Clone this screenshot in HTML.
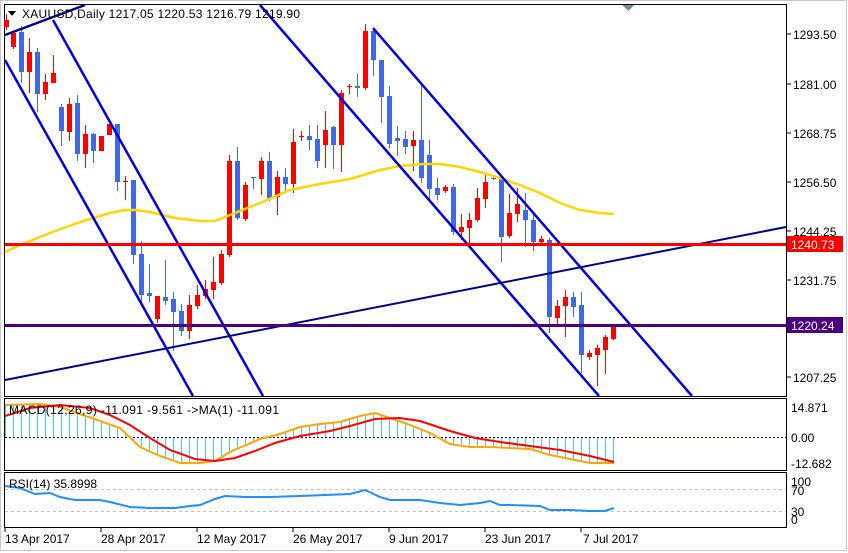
<!DOCTYPE html>
<html><head><meta charset="utf-8"><style>
html,body{margin:0;padding:0;background:#fff;}
body{width:848px;height:553px;overflow:hidden;position:relative;font-family:"Liberation Sans",sans-serif;}
svg{position:absolute;left:0;top:0;}
text{font-family:"Liberation Sans",sans-serif;font-size:12px;fill:#000;}
</style></head><body>
<svg id="s" width="848" height="553" viewBox="0 0 848 553" xmlns="http://www.w3.org/2000/svg" shape-rendering="crispEdges">
<rect x="0" y="0" width="848" height="553" fill="#fff"/>
<rect x="0.5" y="0.5" width="846" height="550" fill="none" stroke="#c8c8c8"/>
<rect x="4.5" y="4.5" width="782" height="392" fill="none" stroke="#000"/>
<rect x="4.5" y="398.5" width="782" height="72" fill="none" stroke="#000"/>
<rect x="4.5" y="472.5" width="782" height="55" fill="none" stroke="#000"/>
<g id="cand"></g>
<g shape-rendering="auto" fill="none">
<polyline stroke="#ffd700" stroke-width="2.5" points="5,252 20,245 50,233 80,222 110,213 125,210 135,210 150,212 175,218 200,221 215,221 230,215 260,203 290,190 320,184 350,179 380,170 400,166 424,164 440,164 460,167 480,172 500,178 520,185 540,193 560,203 580,210 600,213 614,214"/>
<line x1="5" y1="60" x2="193" y2="396" stroke="#0000e0" stroke-width="2.5"/>
<line x1="53" y1="20" x2="263" y2="396" stroke="#0000e0" stroke-width="2.5"/>
<line x1="260" y1="5" x2="599" y2="396" stroke="#0000e0" stroke-width="2.5"/>
<line x1="373" y1="28" x2="692" y2="396" stroke="#0000e0" stroke-width="2.5"/>
<line x1="5" y1="35" x2="85" y2="5" stroke="#000090" stroke-width="2.5"/>
<line x1="5" y1="380" x2="786" y2="227" stroke="#000090" stroke-width="2"/>
</g>
<rect x="5" y="243" width="781" height="3" fill="#ff0000"/>
<rect x="5" y="324" width="781" height="3" fill="#4b0082"/>
<rect x="787" y="236" width="56" height="16" fill="#ff0000"/>
<text x="791" y="249" style="fill:#fff">1240.73</text>
<rect x="787" y="317" width="56" height="16" fill="#4b0082"/>
<text x="791" y="330" style="fill:#fff">1220.24</text>
<g stroke="#000"><line x1="787" y1="34" x2="791" y2="34"/><line x1="787" y1="84" x2="791" y2="84"/><line x1="787" y1="133" x2="791" y2="133"/><line x1="787" y1="182" x2="791" y2="182"/><line x1="787" y1="231" x2="791" y2="231"/><line x1="787" y1="280" x2="791" y2="280"/><line x1="787" y1="377" x2="791" y2="377"/></g>
<text x="793" y="39">1293.50</text>
<text x="793" y="89">1281.00</text>
<text x="793" y="138">1268.75</text>
<text x="793" y="187">1256.50</text>
<text x="793" y="236">1244.25</text>
<text x="793" y="285">1231.75</text>
<text x="793" y="382">1207.25</text>
<polygon points="622,5 634,5 628,11" fill="#7a8796"/>
<polygon points="8,11 16,11 12,16" fill="#000"/>
<text x="22" y="18" textLength="278" lengthAdjust="spacing">XAUUSD,Daily  1217.05 1220.53 1216.79 1219.90</text>
<g id="hist"></g>
<line x1="5" y1="437.5" x2="786" y2="437.5" stroke="#000060" stroke-dasharray="2,2"/>
<g shape-rendering="auto" fill="none">
<polyline id="mo" stroke="#ffa500" stroke-width="2" points="5,405 40,404 60,407 80,414 100,421 120,428 140,447 160,456 180,463 200,463 215,461 230,452 260,439 280,434 300,427 320,424 340,422 360,416 375,413 390,418 410,425 430,433 450,444 470,447 490,447 510,448 530,449 550,455 570,459 590,463 614,463"/>
<polyline stroke="#ff0000" stroke-width="2" points="5,416 30,408 60,405 90,408 110,415 130,425 150,438 170,450 195,459 215,461 235,458 255,451 275,443 300,436 330,431 350,426 375,419 400,418 420,421 450,431 475,438 500,442 530,446 560,450 590,456 614,462"/>
</g>
<text x="9" y="414" textLength="270" lengthAdjust="spacing">MACD(12,26,9) -11.091 -9.561  -&gt;MA(1) -11.091</text>
<text x="791" y="412">14.871</text>
<text x="791" y="442">0.00</text>
<text x="791" y="468">-12.682</text>
<line x1="5" y1="489.5" x2="786" y2="489.5" stroke="#c0c0c0" stroke-dasharray="3,3"/>
<line x1="5" y1="511.5" x2="786" y2="511.5" stroke="#c0c0c0" stroke-dasharray="3,3"/>
<polyline shape-rendering="auto" fill="none" stroke="#1e90ff" stroke-width="2" points="5,486 20,488 35,494 50,493 60,497 75,500 100,500 110,502 130,507 150,508 175,508 190,506 200,505 215,499 225,496 245,497 270,497 300,496 325,495 350,494 365,490 380,497 390,500 420,500 440,503 460,505 480,503 490,501 500,505 510,505 540,506 550,510 570,510 590,511 605,511 614,508"/>
<text x="9" y="488">RSI(14) 35.8998</text>
<text x="791" y="486">100</text>
<text x="791" y="495">70</text>
<text x="791" y="516">30</text>
<text x="791" y="524">0</text>
<g stroke="#000"><line x1="5" y1="528" x2="5" y2="532"/><line x1="101" y1="528" x2="101" y2="532"/><line x1="197" y1="528" x2="197" y2="532"/><line x1="293" y1="528" x2="293" y2="532"/><line x1="389" y1="528" x2="389" y2="532"/><line x1="485" y1="528" x2="485" y2="532"/><line x1="581" y1="528" x2="581" y2="532"/></g>
<text x="5" y="543">13 Apr 2017</text>
<text x="101" y="543">28 Apr 2017</text>
<text x="197" y="543">12 May 2017</text>
<text x="293" y="543">26 May 2017</text>
<text x="389" y="543">9 Jun 2017</text>
<text x="485" y="543">23 Jun 2017</text>
<text x="583" y="543">7 Jul 2017</text>
</svg>
<script>
var C=[[6,1,20,27,14,30],[13,1,33,47,33,49],[21,0,32,72,26,83],[29,1,52,72,38,93],[37,0,52,94,48,112],[45,1,82,94,74,100],[53,1,73,83,55,83],[61,0,107,131,104,146],[69,1,104,132,98,141],[77,0,103,154,95,161],[85,1,134,154,125,168],[93,0,134,151,133,163],[101,1,136,151,136,151],[109,1,124,135,124,135],[117,0,124,182,124,191],[125,1,181,182,176,200],[133,0,180,255,180,264],[141,0,254,295,241,303],[149,0,293,296,264,302],[157,1,296,319,296,323],[165,0,297,301,260,305],[173,0,299,312,292,351],[181,0,311,331,304,336],[189,1,305,331,295,339],[197,1,295,306,285,309],[205,1,289,296,280,299],[213,1,282,290,257,299],[221,1,254,283,250,285],[229,1,161,255,155,257],[237,0,161,218,147,220],[245,1,185,219,182,221],[253,0,177,178,177,189],[261,1,161,179,157,195],[269,0,161,198,152,201],[277,1,177,197,171,215],[285,0,177,184,168,193],[293,1,142,184,129,193],[301,1,136,137,131,141],[309,0,136,140,125,150],[317,0,139,161,125,168],[325,1,130,145,111,168],[333,0,127,145,126,169],[341,1,93,145,90,172],[349,1,86,87,84,94],[357,0,86,88,74,97],[365,1,31,88,24,90],[373,0,31,60,28,76],[381,0,60,97,60,123],[389,0,96,144,86,148],[397,0,138,141,126,156],[405,0,139,147,131,154],[413,1,140,146,131,171],[421,0,140,178,85,183],[429,0,155,189,140,199],[437,0,188,195,178,200],[445,1,187,191,185,193],[453,0,187,232,184,235],[461,1,227,232,214,240],[469,1,220,228,213,247],[477,1,198,220,188,222],[485,1,182,199,174,208],[493,0,178,179,176,180],[501,0,178,237,178,262],[509,1,213,236,194,238],[517,1,204,214,188,222],[525,0,210,220,193,247],[533,0,220,242,215,251],[541,1,239,242,236,243],[549,0,240,317,238,333],[557,1,306,318,300,325],[565,1,297,306,290,337],[573,0,297,307,292,317],[581,0,305,355,292,373],[589,1,353,357,350,360],[597,1,348,355,345,386],[605,1,337,350,335,374],[613,1,327,339,326,340]];
var g=document.getElementById("cand"),h="";
C.forEach(function(c){var col=c[1]?"#ff0000":"#4169e1";
h+='<rect x="'+c[0]+'" y="'+c[4]+'" width="1" height="'+(c[5]-c[4])+'" fill="'+col+'"/>';
h+='<rect x="'+(c[0]-2)+'" y="'+c[2]+'" width="5" height="'+Math.max(1,c[3]-c[2])+'" fill="'+col+'"/>';});
g.innerHTML=h;
var pts=document.getElementById("mo").getAttribute("points").trim().split(/\s+/).map(function(p){return p.split(",").map(Number);});
function v(x){for(var i=1;i<pts.length;i++){if(x<=pts[i][0]){var a=pts[i-1],b=pts[i];return a[1]+(b[1]-a[1])*(x-a[0])/(b[0]-a[0]);}}return pts[pts.length-1][1];}
var hh="";for(var x=5;x<=613;x+=8){var y=v(x);var y1=Math.min(437,y),y2=Math.max(437,y);hh+='<rect x="'+x+'" y="'+y1.toFixed(0)+'" width="1" height="'+Math.max(1,(y2-y1)).toFixed(0)+'" fill="#48d1cc"/>';}
document.getElementById("hist").innerHTML=hh;
</script>
</body></html>
